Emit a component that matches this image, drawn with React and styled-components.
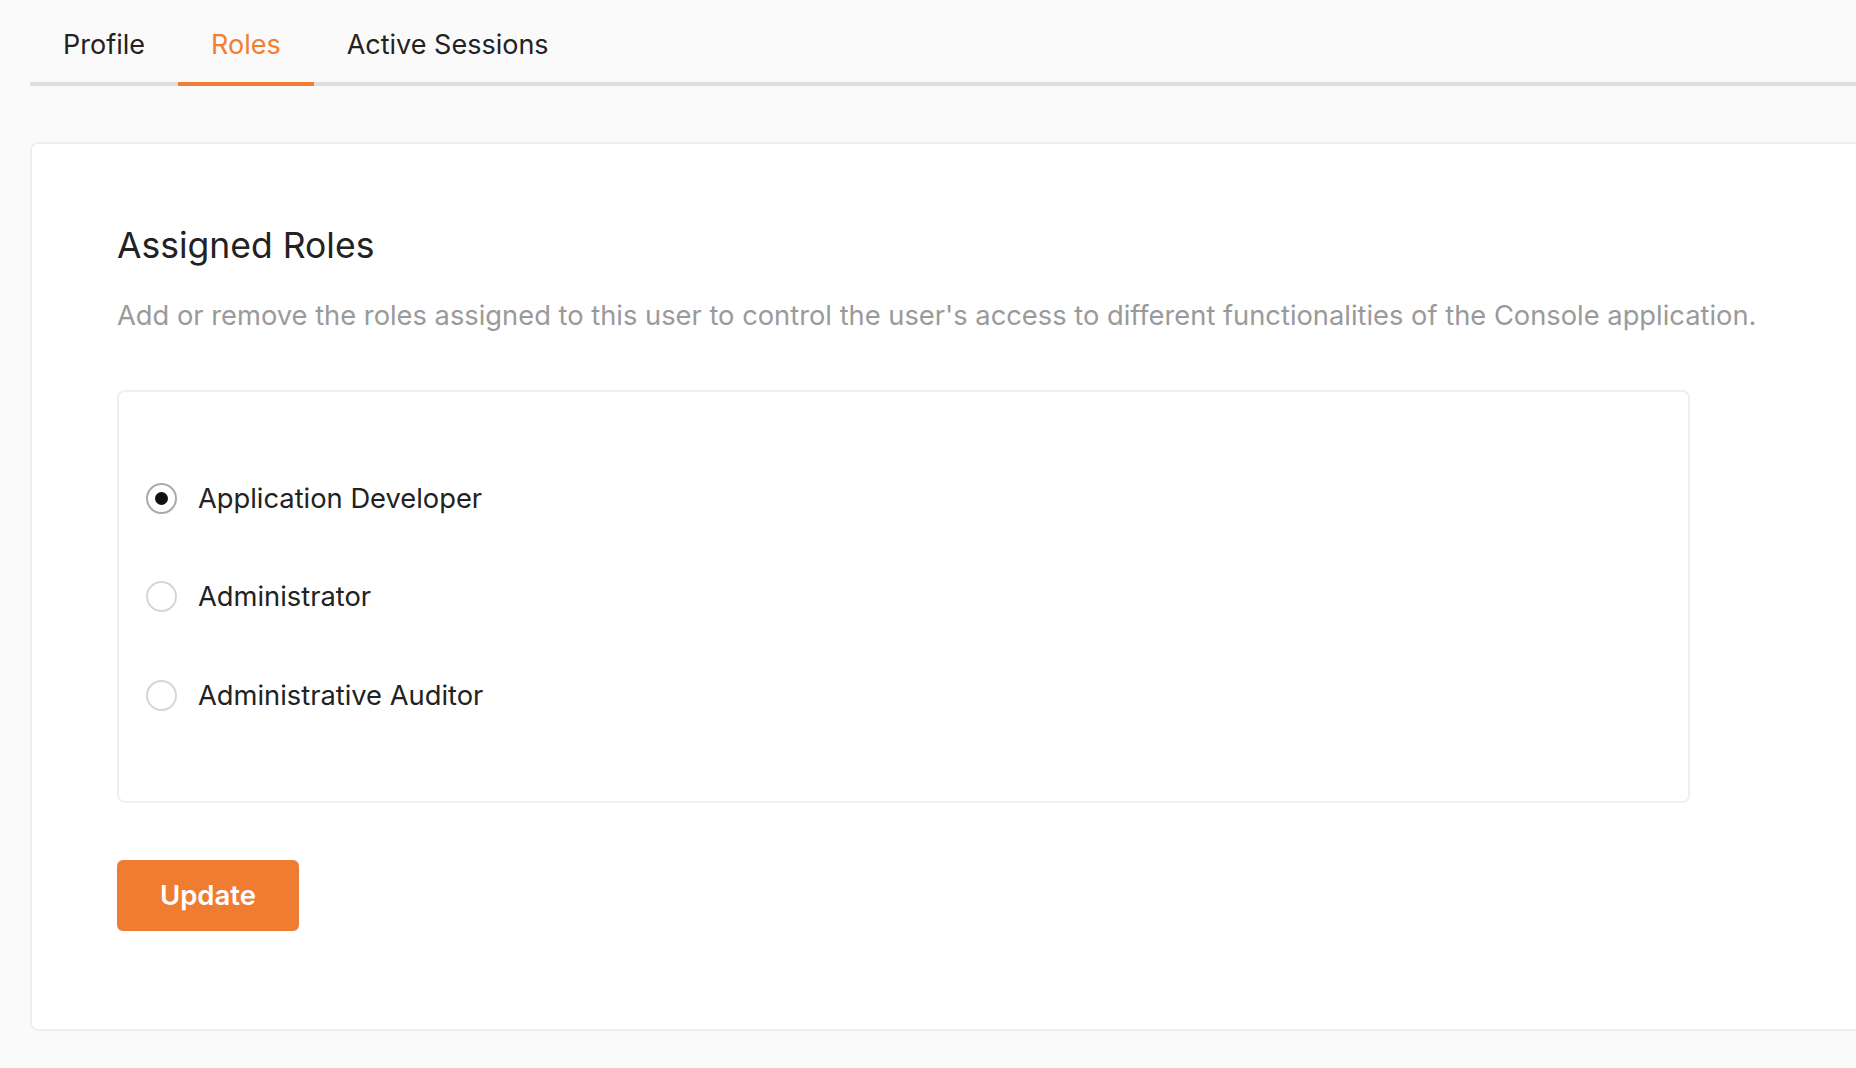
import React, { useState } from 'react';
import styled, { createGlobalStyle } from 'styled-components';

const GlobalStyle = createGlobalStyle`
  html, body {
    margin: 0;
    padding: 0;
    background: #fafafa;
    font-family: 'Inter', 'Liberation Sans', sans-serif;
    color: #222;
  }
  * { box-sizing: border-box; }
`;

const Page = styled.div`
  min-height: 100vh;
  padding: 0 0 0 30px;
  overflow: hidden;
`;

const TabBar = styled.div`
  display: flex;
  border-bottom: 4px solid #dedede;
  height: 86px;
`;

const Tab = styled.button`
  border: none;
  background: none;
  padding: 6px 33px 0;
  margin-bottom: -4px;
  font-family: inherit;
  font-size: 27px;
  color: ${(p) => (p.$active ? '#f17e32' : '#222')};
  border-bottom: 4px solid ${(p) => (p.$active ? '#f17e32' : 'transparent')};
  cursor: pointer;
  display: flex;
  align-items: center;
`;

const Card = styled.section`
  margin-top: 56px;
  margin-right: -20px;
  background: #fff;
  border: 2px solid #efefef;
  border-radius: 8px;
  padding: 80px 85px 98px;
`;

const Title = styled.h2`
  margin: 0;
  font-size: 35.5px;
  font-weight: 400;
  line-height: 44px;
  color: #222;
`;

const Description = styled.p`
  margin: 31px 0 0;
  font-size: 27.3px;
  line-height: 34px;
  color: #9a9a9a;
`;

const RoleBox = styled.div`
  margin-top: 57px;
  width: 1573px;
  border: 2px solid #efefef;
  border-radius: 8px;
  padding: 57px 27px 56px;
`;

const RoleRow = styled.label`
  display: flex;
  align-items: center;
  height: 98.5px;
  gap: 21px;
  cursor: pointer;
  font-size: 27.3px;
  color: #222;
`;

const Radio = styled.span`
  width: 31px;
  height: 31px;
  border-radius: 50%;
  border: 2px solid ${(p) => (p.$checked ? '#aaa' : '#d6d6d6')};
  background: #fff;
  display: flex;
  align-items: center;
  justify-content: center;
  flex-shrink: 0;

  &::after {
    content: '';
    width: 13px;
    height: 13px;
    border-radius: 50%;
    background: ${(p) => (p.$checked ? '#111' : 'transparent')};
  }
`;

const UpdateButton = styled.button`
  margin-top: 57px;
  width: 182px;
  height: 71px;
  border: none;
  border-radius: 6px;
  background: #f07c31;
  color: #fff;
  font-family: inherit;
  font-size: 27.5px;
  font-weight: 600;
  cursor: pointer;
`;

const roles = ['Application Developer', 'Administrator', 'Administrative Auditor'];

export default function App() {
  const [selected, setSelected] = useState('Application Developer');
  const [tab, setTab] = useState('Roles');

  return (
    <Page>
      <GlobalStyle />
      <TabBar>
        {['Profile', 'Roles', 'Active Sessions'].map((t) => (
          <Tab key={t} $active={tab === t} onClick={() => setTab(t)}>
            {t}
          </Tab>
        ))}
      </TabBar>
      <Card>
        <Title>Assigned Roles</Title>
        <Description>
          Add or remove the roles assigned to this user to control the user's access to different functionalities of the Console application.
        </Description>
        <RoleBox>
          {roles.map((r) => (
            <RoleRow key={r} onClick={() => setSelected(r)}>
              <Radio $checked={selected === r} />
              {r}
            </RoleRow>
          ))}
        </RoleBox>
        <UpdateButton>Update</UpdateButton>
      </Card>
    </Page>
  );
}
